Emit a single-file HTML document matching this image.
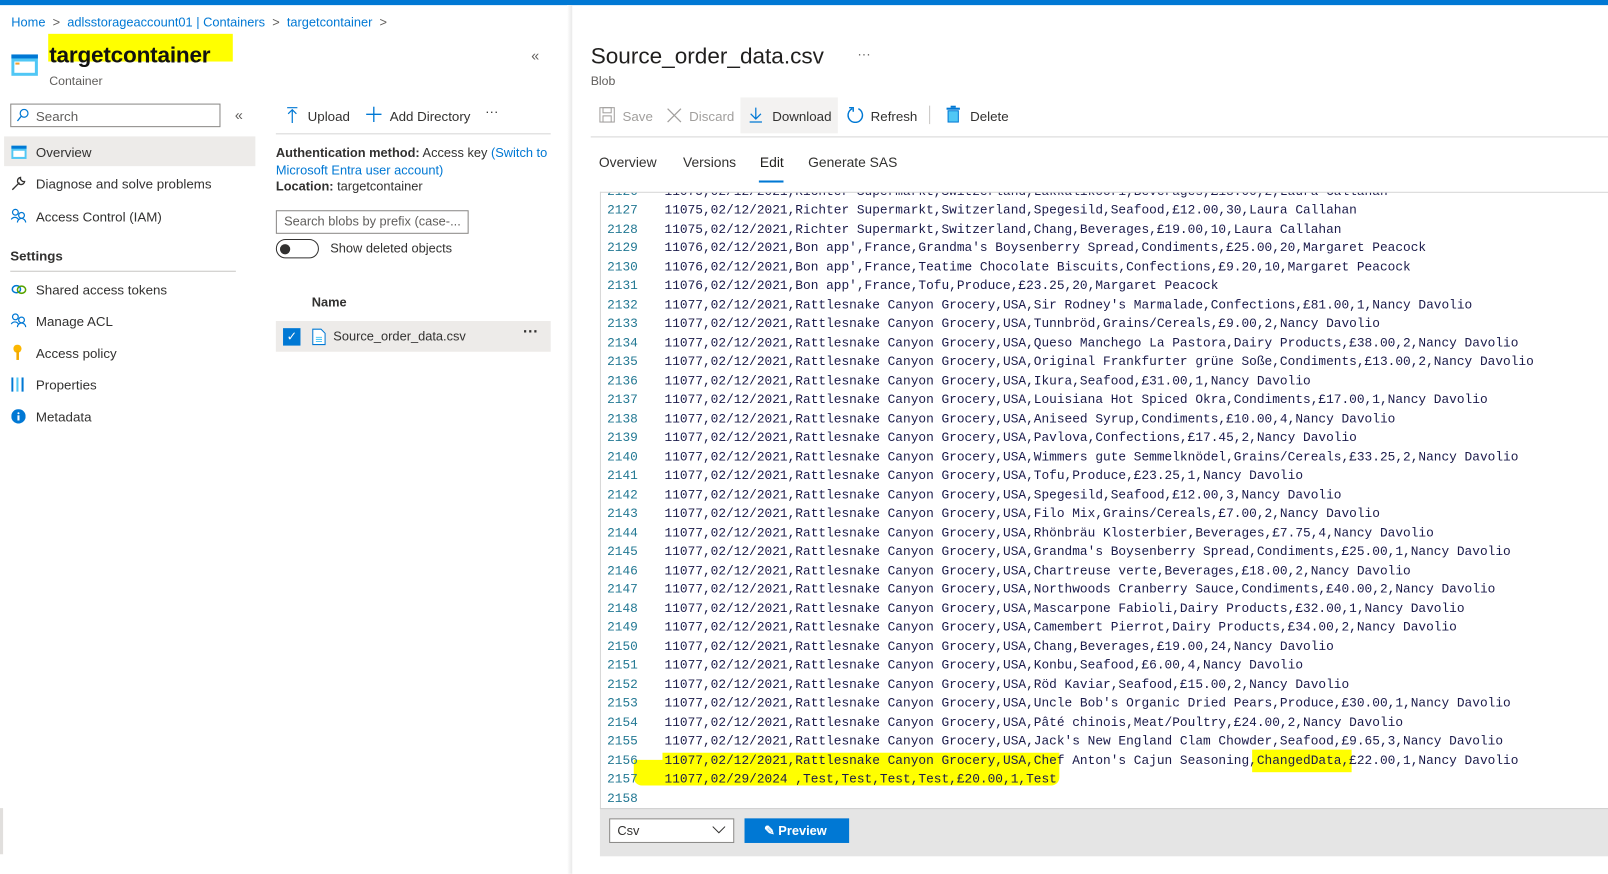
<!DOCTYPE html>
<html><head><meta charset="utf-8"><style>
*{box-sizing:border-box;margin:0;padding:0}
body{width:1608px;height:873px;overflow:hidden;background:#fff;font-family:"Liberation Sans",sans-serif;font-size:13px;color:#323130;position:relative}
#root{position:absolute;left:0;top:0;width:1568px;height:852px;transform:scale(1.02551);transform-origin:0 0;overflow:hidden}
.a{position:absolute;white-space:nowrap}
.blue{color:#0078d4}
.nav{position:absolute;left:35px;font-size:13px}
.ic{position:absolute}
#ed{position:absolute;left:585px;top:187px;width:983px;height:601px;border-top:1px solid #d6d6d6;border-left:1px solid #d6d6d6;overflow:hidden;font-family:"Liberation Mono",monospace;font-size:12.5px}
#ed .l{position:absolute;left:0;height:18.5px;line-height:18.5px;white-space:pre;color:#1a1a4a}
#ed .n{display:inline-block;width:36px;text-align:right;color:#237893}
#ed .c{position:absolute;left:62px}
</style></head><body><div id="root">
<div class="a" style="left:0;top:0;width:1568px;height:5px;background:#0078d4"></div>
<div class="a blue" style="left:11px;top:15px;font-size:12.5px">Home <span style="color:#605e5c">&nbsp;&gt;&nbsp;</span> adlsstorageaccount01 | Containers <span style="color:#605e5c">&nbsp;&gt;&nbsp;</span> targetcontainer <span style="color:#605e5c">&nbsp;&gt;</span></div>
<div class="a" style="left:47px;top:33px;width:180px;height:27px;background:#ffff00"></div>
<div class="a" style="left:48px;top:41px;font-size:22px;color:#111;font-weight:bold;letter-spacing:-0.2px">targetcontainer</div>
<div class="a" style="left:48px;top:72px;font-size:12px;color:#605e5c">Container</div>
<svg class="ic" style="left:11px;top:53px" width="26" height="21"><rect width="26" height="21" fill="#50c7f5"/><rect width="26" height="4" fill="#0078d4"/><rect x="3" y="7" width="20" height="11" fill="#fff"/><rect x="4" y="8" width="4" height="2" fill="#f0a030"/></svg>
<div class="a" style="left:518px;top:46px;color:#605e5c;font-size:14px">«</div>
<div class="a" style="left:10px;top:101px;width:205px;height:23px;border:1px solid #8a8886"></div>
<svg class="ic" style="left:16px;top:106px" width="12" height="13"><circle cx="7.5" cy="4.5" r="3.8" fill="none" stroke="#0078d4" stroke-width="1.2"/><path d="M5 7L1 12" stroke="#0078d4" stroke-width="1.3"/></svg>
<div class="a" style="left:35px;top:106px;color:#605e5c">Search</div>
<div class="a" style="left:229px;top:104px;color:#605e5c;font-size:14px">«</div>
<div class="a" style="left:4px;top:133px;width:245px;height:29px;background:#edebe9"></div>
<svg class="ic" style="left:11px;top:142px" width="15" height="13"><rect width="15" height="13" fill="#50c7f5"/><rect width="15" height="3" fill="#0078d4"/><rect x="2" y="5" width="11" height="6" fill="#fff"/></svg>
<div class="nav" style="top:141px">Overview</div>
<svg class="ic" style="left:10px;top:171px" width="16" height="16"><path d="M2 14L9 7M10 2a3.5 3.5 0 1 0 4 4l-2 0-2-2z" fill="none" stroke="#323130" stroke-width="1.3"/></svg>
<div class="nav" style="top:172px">Diagnose and solve problems</div>
<svg class="ic" style="left:10px;top:203px" width="16" height="15"><circle cx="5" cy="4" r="2.8" fill="none" stroke="#0078d4" stroke-width="1.2"/><path d="M1 11a4 4 0 0 1 7 0" fill="none" stroke="#0078d4" stroke-width="1.2"/><circle cx="11" cy="7" r="2.8" fill="none" stroke="#0078d4" stroke-width="1.2"/><path d="M7 14a4 4 0 0 1 8 0" fill="none" stroke="#0078d4" stroke-width="1.2"/></svg>
<div class="nav" style="top:204px">Access Control (IAM)</div>
<div class="a" style="left:10px;top:242px;font-weight:bold;font-size:13px;color:#323130">Settings</div>
<div class="a" style="left:10px;top:264px;width:220px;height:1px;background:#c8c6c4"></div>
<svg class="ic" style="left:11px;top:277px" width="15" height="10"><ellipse cx="5" cy="5" rx="4" ry="3.5" fill="none" stroke="#0078d4" stroke-width="1.5"/><ellipse cx="10" cy="5.5" rx="4" ry="3.5" fill="none" stroke="#57a300" stroke-width="1.5"/></svg>
<div class="nav" style="top:275px">Shared access tokens</div>
<svg class="ic" style="left:10px;top:305px" width="16" height="15"><circle cx="5" cy="4" r="2.8" fill="none" stroke="#0078d4" stroke-width="1.2"/><path d="M1 11a4 4 0 0 1 7 0" fill="none" stroke="#0078d4" stroke-width="1.2"/><circle cx="11" cy="7" r="2.8" fill="none" stroke="#0078d4" stroke-width="1.2"/><path d="M7 14a4 4 0 0 1 8 0" fill="none" stroke="#0078d4" stroke-width="1.2"/></svg>
<div class="nav" style="top:306px">Manage ACL</div>
<svg class="ic" style="left:13px;top:336px" width="8" height="15"><circle cx="4" cy="4" r="4" fill="#fcb700"/><rect x="3" y="6" width="2.5" height="9" fill="#f2a900"/></svg>
<div class="nav" style="top:337px">Access policy</div>
<svg class="ic" style="left:11px;top:368px" width="13" height="14"><rect x="0" y="0" width="2" height="14" fill="#0078d4"/><rect x="5" y="0" width="2" height="14" fill="#50c7f5"/><rect x="10" y="0" width="2" height="14" fill="#0078d4"/></svg>
<div class="nav" style="top:368px">Properties</div>
<svg class="ic" style="left:11px;top:399px" width="14" height="14"><circle cx="7" cy="7" r="7" fill="#0078d4"/><rect x="6" y="6" width="2" height="5" fill="#fff"/><circle cx="7" cy="4" r="1" fill="#fff"/></svg>
<div class="nav" style="top:399px">Metadata</div>
<div class="a" style="left:0;top:788px;width:3px;height:45px;background:#e1dfdd"></div>
<svg class="ic" style="left:279px;top:104px" width="12" height="16"><path d="M1 1h10M6 3v13M2 7l4-4 4 4" fill="none" stroke="#0078d4" stroke-width="1.2"/></svg>
<div class="a" style="left:300px;top:106px">Upload</div>
<svg class="ic" style="left:357px;top:104px" width="15" height="15"><path d="M7.5 0v15M0 7.5h15" stroke="#0078d4" stroke-width="1.3"/></svg>
<div class="a" style="left:380px;top:106px">Add Directory</div>
<div class="a" style="left:473px;top:101px;font-size:13px">···</div>
<div class="a" style="left:269px;top:130px;width:268px;height:1px;background:#d6d6d6"></div>
<div class="a" style="left:269px;top:142px;font-size:12.5px"><b>Authentication method:</b> Access key <span class="blue">(Switch to</span></div>
<div class="a blue" style="left:269px;top:159px;font-size:12.5px">Microsoft Entra user account)</div>
<div class="a" style="left:269px;top:175px;font-size:12.5px"><b>Location:</b> targetcontainer</div>
<div class="a" style="left:269px;top:205px;width:188px;height:23px;border:1px solid #8a8886"></div>
<div class="a" style="left:277px;top:209px;color:#605e5c;font-size:12.5px">Search blobs by prefix (case-...</div>
<div class="a" style="left:269px;top:233px;width:42px;height:19px;border:1px solid #323130;border-radius:10px"></div>
<div class="a" style="left:273px;top:238px;width:10px;height:10px;border-radius:5px;background:#323130"></div>
<div class="a" style="left:322px;top:235px;font-size:12.5px">Show deleted objects</div>
<div class="a" style="left:304px;top:288px;font-weight:bold;font-size:12.5px">Name</div>
<div class="a" style="left:269px;top:313px;width:268px;height:30px;background:#edebe9"></div>
<div class="a" style="left:276px;top:320px;width:17px;height:17px;background:#0078d4;color:#fff;font-size:12px;text-align:center;line-height:17px">✓</div>
<svg class="ic" style="left:304px;top:320px" width="14" height="17"><path d="M1 1h8l4 4v11H1z" fill="#fff" stroke="#0078d4"/><path d="M4 9h6M4 11h6M4 13h6" stroke="#50c7f5"/></svg>
<div class="a" style="left:325px;top:321px;font-size:12.5px">Source_order_data.csv</div>
<div class="a" style="left:510px;top:315px;font-size:15px;font-weight:bold">···</div>
<div class="a" style="left:553px;top:5px;width:5px;height:868px;background:linear-gradient(to right,#fff,#e8e8e8)"></div>
<div class="a" style="left:576px;top:42px;font-size:22px;color:#201f1e">Source_order_data.csv</div>
<div class="a" style="left:836px;top:45px;color:#605e5c">···</div>
<div class="a" style="left:576px;top:72px;font-size:12px;color:#605e5c">Blob</div>
<svg class="ic" style="left:584px;top:104px" width="16" height="16"><rect x="1" y="1" width="14" height="14" fill="none" stroke="#a19f9d"/><rect x="4" y="1" width="8" height="5" fill="none" stroke="#a19f9d"/><rect x="4" y="9" width="8" height="6" fill="none" stroke="#a19f9d"/></svg>
<div class="a" style="left:607px;top:106px;color:#a19f9d">Save</div>
<svg class="ic" style="left:650px;top:105px" width="15" height="15"><path d="M1 1L14 14M14 1L1 14" stroke="#a19f9d" stroke-width="1.2"/></svg>
<div class="a" style="left:672px;top:106px;color:#a19f9d">Discard</div>
<div class="a" style="left:722px;top:95px;width:95px;height:35px;background:#f3f2f1"></div>
<svg class="ic" style="left:730px;top:104px" width="14" height="16"><path d="M7 1v11M2 7l5 5 5-5M1 15h12" fill="none" stroke="#0078d4" stroke-width="1.2"/></svg>
<div class="a" style="left:753px;top:106px">Download</div>
<svg class="ic" style="left:826px;top:104px" width="16" height="16"><path d="M5 2A7 7 0 1 0 11 2" fill="none" stroke="#0078d4" stroke-width="1.4"/><path d="M2 1h4v4" fill="none" stroke="#0078d4" stroke-width="1.4"/></svg>
<div class="a" style="left:849px;top:106px">Refresh</div>
<div class="a" style="left:906px;top:103px;width:1px;height:18px;background:#c8c6c4"></div>
<svg class="ic" style="left:922px;top:103px" width="15" height="17"><rect x="1" y="2" width="13" height="2" fill="#0078d4"/><rect x="5" y="0" width="5" height="2" fill="#0078d4"/><rect x="2.5" y="5" width="10" height="11" fill="#50c7f5" stroke="#0078d4"/></svg>
<div class="a" style="left:946px;top:106px">Delete</div>
<div class="a" style="left:576px;top:133px;width:1000px;height:1px;background:#d6d6d6"></div>
<div class="a" style="left:584px;top:151px;font-size:13.5px">Overview</div>
<div class="a" style="left:666px;top:151px;font-size:13.5px">Versions</div>
<div class="a" style="left:741px;top:151px;font-size:13.5px;color:#201f1e">Edit</div>
<div class="a" style="left:740px;top:176px;width:24px;height:2px;background:#0078d4"></div>
<div class="a" style="left:788px;top:151px;font-size:13.5px">Generate SAS</div>
<div id="ed">
<div class="a" style="left:32px;top:553px;width:415px;height:25px;background:#ffff00;border-radius:0 4px 8px 8px"></div>
<div class="a" style="left:60px;top:546px;width:387px;height:10px;background:#ffff00"></div>
<div class="a" style="left:635px;top:543px;width:97px;height:22px;background:#ffff00"></div>
<div class="l" style="top:-10px"><span class="n">2126</span><span class="c">11075,02/12/2021,Richter Supermarkt,Switzerland,Lakkalikööri,Beverages,£18.00,2,Laura Callahan</span></div>
<div class="l" style="top:8px"><span class="n">2127</span><span class="c">11075,02/12/2021,Richter Supermarkt,Switzerland,Spegesild,Seafood,£12.00,30,Laura Callahan</span></div>
<div class="l" style="top:26.5px"><span class="n">2128</span><span class="c">11075,02/12/2021,Richter Supermarkt,Switzerland,Chang,Beverages,£19.00,10,Laura Callahan</span></div>
<div class="l" style="top:45px"><span class="n">2129</span><span class="c">11076,02/12/2021,Bon app',France,Grandma's Boysenberry Spread,Condiments,£25.00,20,Margaret Peacock</span></div>
<div class="l" style="top:63.5px"><span class="n">2130</span><span class="c">11076,02/12/2021,Bon app',France,Teatime Chocolate Biscuits,Confections,£9.20,10,Margaret Peacock</span></div>
<div class="l" style="top:82px"><span class="n">2131</span><span class="c">11076,02/12/2021,Bon app',France,Tofu,Produce,£23.25,20,Margaret Peacock</span></div>
<div class="l" style="top:100.5px"><span class="n">2132</span><span class="c">11077,02/12/2021,Rattlesnake Canyon Grocery,USA,Sir Rodney's Marmalade,Confections,£81.00,1,Nancy Davolio</span></div>
<div class="l" style="top:119px"><span class="n">2133</span><span class="c">11077,02/12/2021,Rattlesnake Canyon Grocery,USA,Tunnbröd,Grains/Cereals,£9.00,2,Nancy Davolio</span></div>
<div class="l" style="top:137.5px"><span class="n">2134</span><span class="c">11077,02/12/2021,Rattlesnake Canyon Grocery,USA,Queso Manchego La Pastora,Dairy Products,£38.00,2,Nancy Davolio</span></div>
<div class="l" style="top:156px"><span class="n">2135</span><span class="c">11077,02/12/2021,Rattlesnake Canyon Grocery,USA,Original Frankfurter grüne Soße,Condiments,£13.00,2,Nancy Davolio</span></div>
<div class="l" style="top:174.5px"><span class="n">2136</span><span class="c">11077,02/12/2021,Rattlesnake Canyon Grocery,USA,Ikura,Seafood,£31.00,1,Nancy Davolio</span></div>
<div class="l" style="top:193px"><span class="n">2137</span><span class="c">11077,02/12/2021,Rattlesnake Canyon Grocery,USA,Louisiana Hot Spiced Okra,Condiments,£17.00,1,Nancy Davolio</span></div>
<div class="l" style="top:211.5px"><span class="n">2138</span><span class="c">11077,02/12/2021,Rattlesnake Canyon Grocery,USA,Aniseed Syrup,Condiments,£10.00,4,Nancy Davolio</span></div>
<div class="l" style="top:230px"><span class="n">2139</span><span class="c">11077,02/12/2021,Rattlesnake Canyon Grocery,USA,Pavlova,Confections,£17.45,2,Nancy Davolio</span></div>
<div class="l" style="top:248.5px"><span class="n">2140</span><span class="c">11077,02/12/2021,Rattlesnake Canyon Grocery,USA,Wimmers gute Semmelknödel,Grains/Cereals,£33.25,2,Nancy Davolio</span></div>
<div class="l" style="top:267px"><span class="n">2141</span><span class="c">11077,02/12/2021,Rattlesnake Canyon Grocery,USA,Tofu,Produce,£23.25,1,Nancy Davolio</span></div>
<div class="l" style="top:285.5px"><span class="n">2142</span><span class="c">11077,02/12/2021,Rattlesnake Canyon Grocery,USA,Spegesild,Seafood,£12.00,3,Nancy Davolio</span></div>
<div class="l" style="top:304px"><span class="n">2143</span><span class="c">11077,02/12/2021,Rattlesnake Canyon Grocery,USA,Filo Mix,Grains/Cereals,£7.00,2,Nancy Davolio</span></div>
<div class="l" style="top:322.5px"><span class="n">2144</span><span class="c">11077,02/12/2021,Rattlesnake Canyon Grocery,USA,Rhönbräu Klosterbier,Beverages,£7.75,4,Nancy Davolio</span></div>
<div class="l" style="top:341px"><span class="n">2145</span><span class="c">11077,02/12/2021,Rattlesnake Canyon Grocery,USA,Grandma's Boysenberry Spread,Condiments,£25.00,1,Nancy Davolio</span></div>
<div class="l" style="top:359.5px"><span class="n">2146</span><span class="c">11077,02/12/2021,Rattlesnake Canyon Grocery,USA,Chartreuse verte,Beverages,£18.00,2,Nancy Davolio</span></div>
<div class="l" style="top:378px"><span class="n">2147</span><span class="c">11077,02/12/2021,Rattlesnake Canyon Grocery,USA,Northwoods Cranberry Sauce,Condiments,£40.00,2,Nancy Davolio</span></div>
<div class="l" style="top:396.5px"><span class="n">2148</span><span class="c">11077,02/12/2021,Rattlesnake Canyon Grocery,USA,Mascarpone Fabioli,Dairy Products,£32.00,1,Nancy Davolio</span></div>
<div class="l" style="top:415px"><span class="n">2149</span><span class="c">11077,02/12/2021,Rattlesnake Canyon Grocery,USA,Camembert Pierrot,Dairy Products,£34.00,2,Nancy Davolio</span></div>
<div class="l" style="top:433.5px"><span class="n">2150</span><span class="c">11077,02/12/2021,Rattlesnake Canyon Grocery,USA,Chang,Beverages,£19.00,24,Nancy Davolio</span></div>
<div class="l" style="top:452px"><span class="n">2151</span><span class="c">11077,02/12/2021,Rattlesnake Canyon Grocery,USA,Konbu,Seafood,£6.00,4,Nancy Davolio</span></div>
<div class="l" style="top:470.5px"><span class="n">2152</span><span class="c">11077,02/12/2021,Rattlesnake Canyon Grocery,USA,Röd Kaviar,Seafood,£15.00,2,Nancy Davolio</span></div>
<div class="l" style="top:489px"><span class="n">2153</span><span class="c">11077,02/12/2021,Rattlesnake Canyon Grocery,USA,Uncle Bob's Organic Dried Pears,Produce,£30.00,1,Nancy Davolio</span></div>
<div class="l" style="top:507.5px"><span class="n">2154</span><span class="c">11077,02/12/2021,Rattlesnake Canyon Grocery,USA,Pâté chinois,Meat/Poultry,£24.00,2,Nancy Davolio</span></div>
<div class="l" style="top:526px"><span class="n">2155</span><span class="c">11077,02/12/2021,Rattlesnake Canyon Grocery,USA,Jack's New England Clam Chowder,Seafood,£9.65,3,Nancy Davolio</span></div>
<div class="l" style="top:544.5px"><span class="n">2156</span><span class="c">11077,02/12/2021,Rattlesnake Canyon Grocery,USA,Chef Anton's Cajun Seasoning,ChangedData,£22.00,1,Nancy Davolio</span></div>
<div class="l" style="top:563px"><span class="n">2157</span><span class="c">11077,02/29/2024 ,Test,Test,Test,Test,£20.00,1,Test</span></div>
<div class="l" style="top:581.5px"><span class="n">2158</span></div>
</div>
<div class="a" style="left:585px;top:788px;width:983px;height:47px;background:#e5e5e5;border-top:1px solid #d0d0d0"></div>
<div class="a" style="left:594px;top:798px;width:122px;height:24px;background:#fff;border:1px solid #8a8886"></div>
<div class="a" style="left:602px;top:803px;font-size:12.5px">Csv</div>
<svg class="ic" style="left:694px;top:805px" width="14" height="9"><path d="M1 1l6 6 6-6" fill="none" stroke="#323130"/></svg>
<div class="a" style="left:726px;top:798px;width:102px;height:24px;background:#0078d4"></div>
<div class="a" style="left:745px;top:802px;color:#fff;font-weight:bold;font-size:12.5px">✎ Preview</div>
</div></body></html>
